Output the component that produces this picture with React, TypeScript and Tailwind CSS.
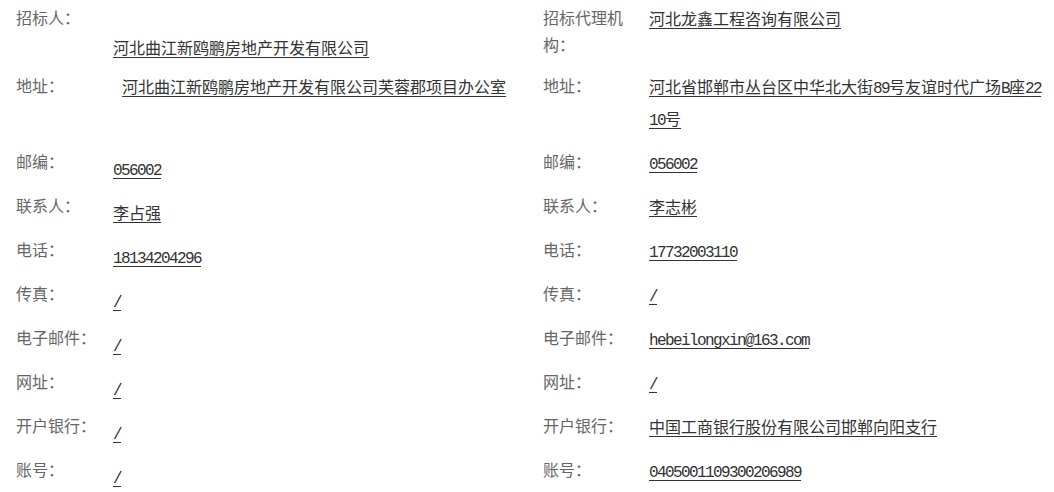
import type { ReactNode } from 'react';

type Cell = { label: string; value: string };

const rows: { left: Cell; right: Cell }[] = [
  {
    left: { label: '招标人：', value: '河北曲江新鸥鹏房地产开发有限公司' },
    right: { label: '招标代理机构：', value: '河北龙鑫工程咨询有限公司' }
  },
  {
    left: { label: '地址：', value: '河北曲江新鸥鹏房地产开发有限公司芙蓉郡项目办公室' },
    right: { label: '地址：', value: '河北省邯郸市丛台区中华北大街89号友谊时代广场B座2210号' }
  },
  { left: { label: '邮编：', value: '056002' }, right: { label: '邮编：', value: '056002' } },
  { left: { label: '联系人：', value: '李占强' }, right: { label: '联系人：', value: '李志彬' } },
  {
    left: { label: '电话：', value: '18134204296' },
    right: { label: '电话：', value: '17732003110' }
  },
  { left: { label: '传真：', value: '/' }, right: { label: '传真：', value: '/' } },
  {
    left: { label: '电子邮件：', value: '/' },
    right: { label: '电子邮件：', value: 'hebeilongxin@163.com' }
  },
  { left: { label: '网址：', value: '/' }, right: { label: '网址：', value: '/' } },
  {
    left: { label: '开户银行：', value: '/' },
    right: { label: '开户银行：', value: '中国工商银行股份有限公司邯郸向阳支行' }
  },
  {
    left: { label: '账号：', value: '/' },
    right: { label: '账号：', value: '0405001109300206989' }
  }
];

// ASCII runs get a fixed half-em advance, like the CJK font in the original.
function Mixed({ text }: { text: string }) {
  const parts = text.match(/[\x00-\x7f]+|[^\x00-\x7f]+/g) ?? [];
  return (
    <>
      {parts.map((p, i) =>
        /^[\x00-\x7f]+$/.test(p) ? (
          <span key={i} className="font-['Liberation_Mono',monospace] leading-none tracking-[-1.6px]">
            {p}
          </span>
        ) : (
          <span key={i} className="leading-none">
            {p}
          </span>
        )
      )}
    </>
  );
}

function Label({ children, wide }: { children: ReactNode; wide?: boolean }) {
  return (
    <div
      className={
        wide
          ? 'mt-[2px] w-[106px] shrink-0 pr-[18px] leading-[27px] text-[#666]'
          : 'mt-[2px] w-[97px] shrink-0 leading-[27px] text-[#666]'
      }
    >
      {children}
    </div>
  );
}

function Value({ text, className }: { text: string; className: string }) {
  return (
    <div className={`min-w-0 flex-1 break-all text-[#333] ${className}`}>
      <span className="leading-none underline decoration-[#333] underline-offset-[3px]">
        <Mixed text={text} />
      </span>
    </div>
  );
}

export default function App() {
  return (
    <div className="min-h-screen bg-white pt-[2px] font-['Noto_Sans_CJK_SC','Noto_Sans',sans-serif] text-[16px]">
      <div className="grid w-[1054px] grid-cols-[527px_527px]">
        {rows.map((row, i) => (
          <div key={i} className="contents">
            <div className={i === 0 ? 'flex items-start pl-[16px]' : 'flex h-full items-start pl-[16px]'}>
              <Label>{row.left.label}</Label>
              <Value
                text={row.left.value}
                className={
                  i === 0
                    ? 'pt-[32px] leading-[26px]'
                    : i === 1
                      ? 'pl-[9px] leading-[32px]'
                      : 'pt-[6px] leading-[32px]'
                }
              />
            </div>
            <div className="flex items-start pb-[12px] pl-[16px] pr-[9px]">
              <Label wide>{row.right.label}</Label>
              <Value text={row.right.value} className="leading-[32px]" />
            </div>
          </div>
        ))}
      </div>
    </div>
  );
}
